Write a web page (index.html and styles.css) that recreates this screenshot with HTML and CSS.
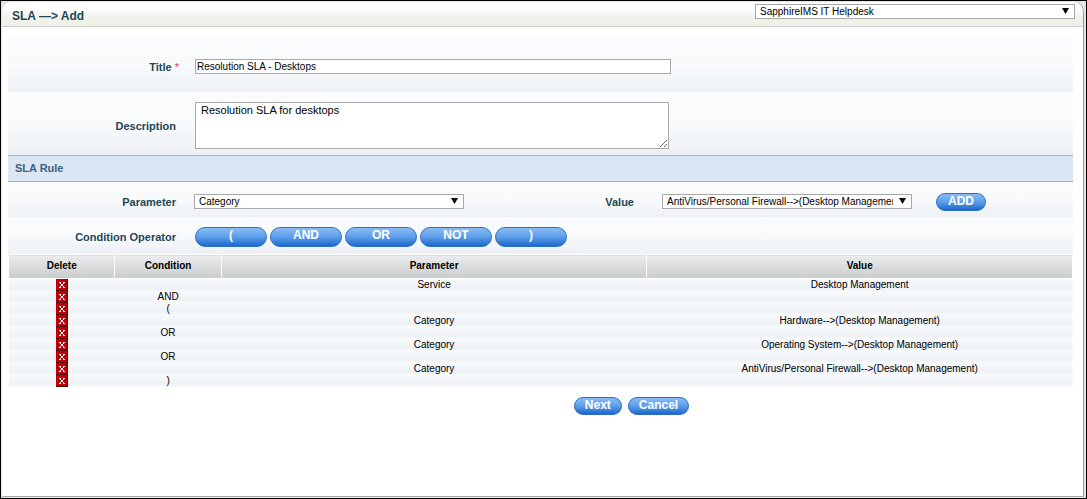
FILE: index.html
```
<!DOCTYPE html>
<html lang="en">
<head>
  <meta charset="UTF-8" />
  <meta name="viewport" content="width=device-width, initial-scale=1.0">
  <title>SLA - Add</title>
  <link rel="stylesheet" href="styles.css">
</head>
<body>
  <!-- Delete icon -->
  <svg class="sprite" aria-hidden="true">
    <symbol id="icon-delete" viewBox="0 0 12 12">
      <path fill="#c00008" d="M0 0h12v12H0z"/>
      <path fill="#500" d="M11 0h1v12H0v-1h11z"/>
      <path fill="#fff" d="M3 3h2v1H3zM7 3h2v1H7zM4 4h1v1H4zM7 4h1v1H7zM5 5h2v2H5zM4 7h1v1H4zM7 7h1v1H7zM3 8h2v1H3zM7 8h2v1H7z"/>
    </symbol>
  </svg>

  <form class="panel">
    <!-- Header -->
    <header class="header">
      <h1>SLA &mdash;&gt; Add</h1>
      <select class="project" aria-label="Project">
        <option>SapphireIMS IT Helpdesk</option>
      </select>
    </header>

    <main class="content">
      <!-- SLA details -->
      <div class="row row-title">
        <label for="title">Title <span class="required">*</span></label>
        <input type="text" id="title" value="Resolution SLA - Desktops">
      </div>
      <div class="row row-description">
        <label for="description">Description</label>
        <textarea id="description">Resolution SLA for desktops</textarea>
      </div>

      <!-- SLA rule -->
      <h2>SLA Rule</h2>
      <div class="row row-parameter">
        <label for="parameter">Parameter</label>
        <select id="parameter" class="parameter">
          <option>Category</option>
        </select>
        <label for="value" class="value-label">Value</label>
        <select id="value" class="value">
          <option>AntiVirus/Personal Firewall--&gt;(Desktop Management)</option>
        </select>
        <button type="button" class="btn btn-add">ADD</button>
      </div>
      <div class="row row-operator">
        <span class="label" id="operatorLabel">Condition Operator</span>
        <div class="operators" role="group" aria-labelledby="operatorLabel">
          <button type="button" class="btn">(</button>
          <button type="button" class="btn">AND</button>
          <button type="button" class="btn">OR</button>
          <button type="button" class="btn">NOT</button>
          <button type="button" class="btn">)</button>
        </div>
      </div>

      <table class="rules">
        <thead>
          <tr>
            <th class="narrow">Delete</th>
            <th class="narrow">Condition</th>
            <th>Parameter</th>
            <th>Value</th>
          </tr>
        </thead>
        <tbody>
          <tr>
            <td><button type="button" class="delete" aria-label="Delete"><svg><use href="#icon-delete"/></svg></button></td>
            <td></td>
            <td>Service</td>
            <td>Desktop Management</td>
          </tr>
          <tr>
            <td><button type="button" class="delete" aria-label="Delete"><svg><use href="#icon-delete"/></svg></button></td>
            <td>AND</td>
            <td></td>
            <td></td>
          </tr>
          <tr>
            <td><button type="button" class="delete" aria-label="Delete"><svg><use href="#icon-delete"/></svg></button></td>
            <td>(</td>
            <td></td>
            <td></td>
          </tr>
          <tr>
            <td><button type="button" class="delete" aria-label="Delete"><svg><use href="#icon-delete"/></svg></button></td>
            <td></td>
            <td>Category</td>
            <td>Hardware--&gt;(Desktop Management)</td>
          </tr>
          <tr>
            <td><button type="button" class="delete" aria-label="Delete"><svg><use href="#icon-delete"/></svg></button></td>
            <td>OR</td>
            <td></td>
            <td></td>
          </tr>
          <tr>
            <td><button type="button" class="delete" aria-label="Delete"><svg><use href="#icon-delete"/></svg></button></td>
            <td></td>
            <td>Category</td>
            <td>Operating System--&gt;(Desktop Management)</td>
          </tr>
          <tr>
            <td><button type="button" class="delete" aria-label="Delete"><svg><use href="#icon-delete"/></svg></button></td>
            <td>OR</td>
            <td></td>
            <td></td>
          </tr>
          <tr>
            <td><button type="button" class="delete" aria-label="Delete"><svg><use href="#icon-delete"/></svg></button></td>
            <td></td>
            <td>Category</td>
            <td>AntiVirus/Personal Firewall--&gt;(Desktop Management)</td>
          </tr>
          <tr>
            <td><button type="button" class="delete" aria-label="Delete"><svg><use href="#icon-delete"/></svg></button></td>
            <td>)</td>
            <td></td>
            <td></td>
          </tr>
        </tbody>
      </table>

      <!-- Actions -->
      <div class="actions">
        <button type="button" class="btn">Next</button>
        <button type="button" class="btn">Cancel</button>
      </div>
    </main>
  </form>
</body>
</html>
```
FILE: styles.css
```
/* General */
* {
  box-sizing: border-box;
}

body {
  display: flex;
  min-height: 100vh;
  margin: 0;
  padding: 1px 2px 1px 1px;
  border: 1px solid #000;
  background-color: #e4e4e4;
  color: #000;
  font-family: "Liberation Sans", Arial, sans-serif;
  font-size: 10px;
}

.sprite {
  display: none;
}

.panel {
  flex: 1;
  min-width: 0;
  border-right: 1px solid #999;
  border-bottom: 1px solid #aaa;
  border-radius: 10px 10px 0 0;
  background-color: #fff;
}

/* Header */
.header {
  display: flex;
  align-items: flex-start;
  justify-content: space-between;
  height: 25px;
  padding: 2px 8px 0 10px;
  border-bottom: 1px solid #ccc;
  border-radius: 10px 10px 0 0;
  background: linear-gradient(#fff 20%, #f0f1e9 70%);
}

h1 {
  margin: 0;
  color: #1d4754;
  font-size: 12px;
  line-height: 24px;
}

.content {
  padding: 10px 10px 0 6px;
}

/* Form rows */
.row {
  display: flex;
  align-items: center;
  background: linear-gradient(#fafbfc, #f8fafc 50%, #edf1f5);
}

.row-title {
  height: 55px;
  padding-top: 4px;
}

.row-description {
  height: 63px;
  padding-top: 4px;
}

.row-parameter {
  height: 35px;
  padding-top: 4px;
}

.row-operator {
  height: 37px;
  padding-top: 2px;
}

label,
.label {
  flex: none;
  width: 187px;
  padding-right: 19px;
  color: #1d4754;
  font-size: 11px;
  font-weight: bold;
  text-align: right;
}

.row-title label {
  padding-right: 16px;
}

.required {
  color: #e33;
  font-weight: normal;
}

.row-parameter label {
  width: 186px;
  padding-right: 18px;
}

.row-parameter .value-label {
  width: 198px;
  padding-right: 28px;
}

h2 {
  margin: 0;
  padding-left: 7px;
  border: 1px solid #a4b1bd;
  border-width: 1px 0;
  background-color: #dae6f4;
  color: #3f6080;
  font-size: 11px;
  line-height: 25px;
}

input,
textarea,
select {
  border: 1px solid #a9a9a9;
  border-radius: 0;
  background-color: #fff;
  color: #000;
  font-family: inherit;
  font-size: 10px;
}

input {
  width: 476px;
  height: 15px;
  padding: 0 1px;
}

textarea {
  width: 474px;
  height: 47px;
  padding: 1px 5px;
  font-size: 11px;
}

select {
  height: 15px;
  padding: 0 18px 0 4px;
  appearance: none;
  background-image: url("data:image/svg+xml,%3Csvg xmlns='http://www.w3.org/2000/svg' width='7' height='6'%3E%3Cpath d='M0 0h7L3.5 6z'/%3E%3C/svg%3E");
  background-position: right 5px top 3px;
  background-repeat: no-repeat;
}

.project {
  width: 320px;
}

.parameter {
  width: 270px;
}

.value {
  width: 250px;
}

/* Buttons */
.btn {
  height: 18px;
  padding: 0 10px 3px;
  border: 1px solid #2d6fc6;
  border-radius: 10px;
  background: linear-gradient(#8abcf4, #5c9eea 50%, #1c67cb);
  color: #fff;
  font-family: inherit;
  font-size: 12px;
  font-weight: bold;
  line-height: 14px;
  cursor: pointer;
}

.btn-add {
  width: 50px;
  margin-left: 24px;
}

.operators {
  display: flex;
  gap: 3px;
}

.operators .btn {
  width: 72px;
  height: 20px;
}

.actions {
  display: flex;
  justify-content: center;
  gap: 6px;
  padding: 10px 0 14px 182px;
}

/* Rules table */
.rules {
  width: 100%;
  border-collapse: collapse;
  table-layout: fixed;
  text-align: center;
}

.rules th {
  height: 24px;
  padding: 0 0 2px;
  border: 1px solid #fff;
  background: linear-gradient(#eaeced, #c9cccd);
  font-size: 10px;
}

.rules .narrow {
  width: 10%;
}

.rules td {
  height: 12px;
  padding: 0;
  line-height: 12px;
}

.rules tbody tr {
  background: linear-gradient(#f8fafb, #edf1f5 70%, #f8fafb);
}

.delete {
  display: block;
  width: 12px;
  height: 12px;
  margin: 0 auto;
  padding: 0;
  border: 0;
  background: none;
  cursor: pointer;
}

.delete svg {
  display: block;
  width: 12px;
  height: 12px;
  shape-rendering: crispEdges;
}
```
